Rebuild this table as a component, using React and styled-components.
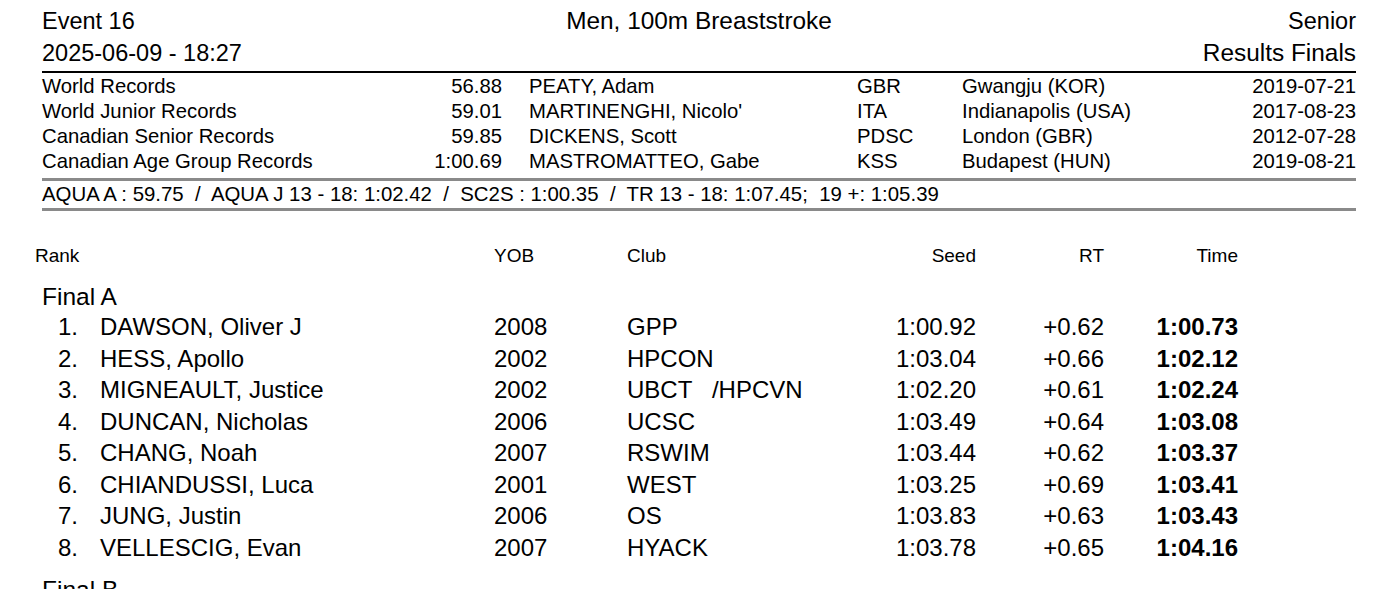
import { Fragment } from 'react';
import styled, { createGlobalStyle } from 'styled-components';

const GlobalStyle = createGlobalStyle`
  html, body {
    margin: 0;
    padding: 0;
    background: #ffffff;
  }
  body {
    font-family: "Liberation Sans", Arial, sans-serif;
    color: #000000;
    overflow: hidden;
  }
`;

const Page = styled.div`
  width: 1314px;
  padding: 5px 39px 0 42px;
`;

const HeaderGrid = styled.div`
  display: grid;
  grid-template-columns: 1fr auto 1fr;
  font-size: 23.5px;
  line-height: 32px;
  border-bottom: 2px solid #000000;
  padding-bottom: 2px;
`;

const HeaderCell = styled.div`
  text-align: ${(p) => p.$align || 'left'};
  font-size: ${(p) => (p.$large ? '24.4px' : 'inherit')};
  white-space: nowrap;
`;

const RecordsTable = styled.div`
  display: grid;
  grid-template-columns: 300px 160px 355px 105px 1fr auto;
  font-size: 20.3px;
  line-height: 25px;
  padding-top: 1px;
`;

const RecordCell = styled.div`
  text-align: ${(p) => (p.$right ? 'right' : 'left')};
  padding-left: ${(p) => p.$indent || 0}px;
  white-space: nowrap;
`;

const QualifyLine = styled.div`
  margin-top: 4px;
  border-top: 3px solid #8a8a8a;
  border-bottom: 3px solid #8a8a8a;
  font-size: 20.4px;
  line-height: 26px;
  white-space: pre;
  padding-bottom: 1px;
`;

const Results = styled.div`
  margin: 33px 0 0 -7px;
`;

const ResultRow = styled.div`
  display: grid;
  grid-template-columns: 43px 416px 133px 173px 176px 128px 134px;
  font-size: ${(p) => (p.$head ? '19px' : '24px')};
  line-height: ${(p) => (p.$head ? '24px' : '31.5px')};
`;

const Cell = styled.div`
  text-align: ${(p) => (p.$right ? 'right' : 'left')};
  padding-left: ${(p) => p.$indent || 0}px;
  font-weight: ${(p) => (p.$bold ? 700 : 400)};
  white-space: pre;
`;

const HeadRank = styled(Cell)`
  grid-column: 1 / 3;
`;

const GroupTitle = styled.div`
  font-size: 24.5px;
  line-height: 29px;
  padding-left: 7px;
  margin-top: ${(p) => p.$gap || 0}px;
`;

const records = [
  ['World Records', '56.88', 'PEATY, Adam', 'GBR', 'Gwangju (KOR)', '2019-07-21'],
  ['World Junior Records', '59.01', "MARTINENGHI, Nicolo'", 'ITA', 'Indianapolis (USA)', '2017-08-23'],
  ['Canadian Senior Records', '59.85', 'DICKENS, Scott', 'PDSC', 'London (GBR)', '2012-07-28'],
  ['Canadian Age Group Records', '1:00.69', 'MASTROMATTEO, Gabe', 'KSS', 'Budapest (HUN)', '2019-08-21'],
];

const finalA = [
  ['1.', 'DAWSON, Oliver J', '2008', 'GPP', '1:00.92', '+0.62', '1:00.73'],
  ['2.', 'HESS, Apollo', '2002', 'HPCON', '1:03.04', '+0.66', '1:02.12'],
  ['3.', 'MIGNEAULT, Justice', '2002', 'UBCT   /HPCVN', '1:02.20', '+0.61', '1:02.24'],
  ['4.', 'DUNCAN, Nicholas', '2006', 'UCSC', '1:03.49', '+0.64', '1:03.08'],
  ['5.', 'CHANG, Noah', '2007', 'RSWIM', '1:03.44', '+0.62', '1:03.37'],
  ['6.', 'CHIANDUSSI, Luca', '2001', 'WEST', '1:03.25', '+0.69', '1:03.41'],
  ['7.', 'JUNG, Justin', '2006', 'OS', '1:03.83', '+0.63', '1:03.43'],
  ['8.', 'VELLESCIG, Evan', '2007', 'HYACK', '1:03.78', '+0.65', '1:04.16'],
];

export default function App() {
  return (
    <>
      <GlobalStyle />
      <Page>
        <HeaderGrid>
          <HeaderCell>Event 16</HeaderCell>
          <HeaderCell $align="center" $large>Men, 100m Breaststroke</HeaderCell>
          <HeaderCell $align="right">Senior</HeaderCell>
          <HeaderCell>2025-06-09 - 18:27</HeaderCell>
          <HeaderCell />
          <HeaderCell $align="right" $large>Results Finals</HeaderCell>
        </HeaderGrid>

        <RecordsTable>
          {records.map((r) => (
            <Fragment key={r[0]}>
              <RecordCell>{r[0]}</RecordCell>
              <RecordCell $right>{r[1]}</RecordCell>
              <RecordCell $indent={27}>{r[2]}</RecordCell>
              <RecordCell>{r[3]}</RecordCell>
              <RecordCell>{r[4]}</RecordCell>
              <RecordCell $right>{r[5]}</RecordCell>
            </Fragment>
          ))}
        </RecordsTable>

        <QualifyLine>
          {'AQUA A : 59.75  /  AQUA J 13 - 18: 1:02.42  /  SC2S : 1:00.35  /  TR 13 - 18: 1:07.45;  19 +: 1:05.39'}
        </QualifyLine>

        <Results>
          <ResultRow $head>
            <HeadRank>Rank</HeadRank>
            <Cell>YOB</Cell>
            <Cell>Club</Cell>
            <Cell $right>Seed</Cell>
            <Cell $right>RT</Cell>
            <Cell $right>Time</Cell>
          </ResultRow>

          <GroupTitle $gap={14}>Final A</GroupTitle>
          {finalA.map((r) => (
            <ResultRow key={r[0]}>
              <Cell $right>{r[0]}</Cell>
              <Cell $indent={22}>{r[1]}</Cell>
              <Cell>{r[2]}</Cell>
              <Cell>{r[3]}</Cell>
              <Cell $right>{r[4]}</Cell>
              <Cell $right>{r[5]}</Cell>
              <Cell $right $bold>{r[6]}</Cell>
            </ResultRow>
          ))}

          <GroupTitle $gap={12}>Final B</GroupTitle>
        </Results>
      </Page>
    </>
  );
}
